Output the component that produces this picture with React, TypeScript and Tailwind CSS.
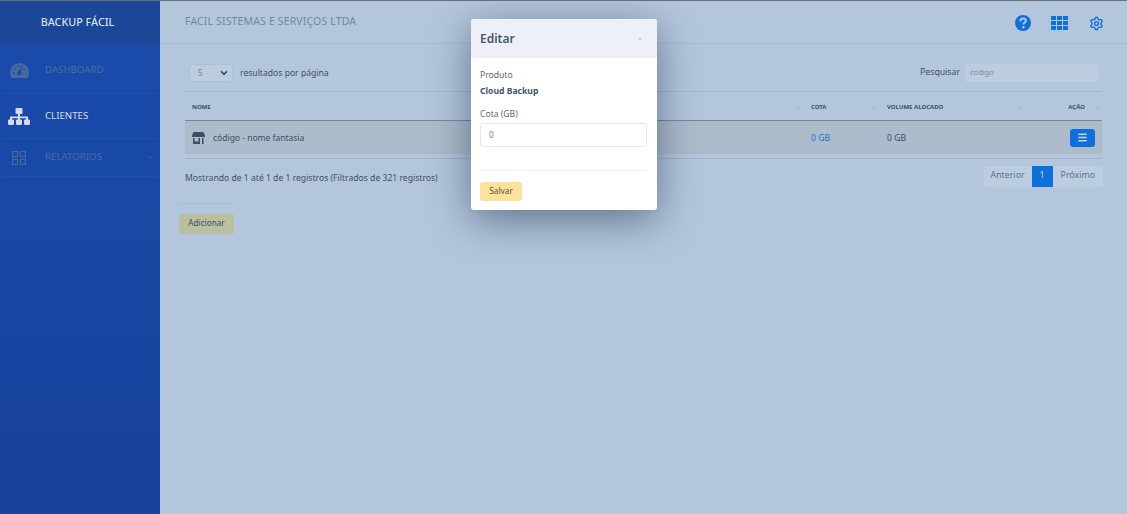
import React from 'react';
import { ChevronDown, Menu, Settings, X } from 'lucide-react';

function SortArrows() {
  return <span className="text-[6px] leading-none tracking-[-1px] font-normal text-[#8fa2ba]">↑↓</span>;
}

function Gauge() {
  return (
    <svg width="19" height="15" viewBox="0 0 19 15" fill="#47699f">
      <path d="M9.500 0A9.500 9.500 0 0 0 0 9.500c0 2 .5 3.800 1.500 5.500h16c1-1.700 1.500-3.500 1.500-5.500A9.500 9.500 0 0 0 9.500 0Z" />
      <path d="M9.800 9 12.500 2.500M4 5.500l1.500 1M8.500 2v2M15 6l-1.500 1M3 10h2" stroke="#1a4aa5" strokeWidth="1.300" fill="none" />
      <circle cx="9.500" cy="10" r="2.200" fill="#1a4aa5" />
    </svg>
  );
}

function Sitemap() {
  return (
    <svg width="22" height="17" viewBox="0 0 22 17" fill="#d3dced">
      <rect x="7.500" y="0" width="7" height="6" rx="1" />
      <path d="M10 6h2v2.500h8V12h-2V10.300h-6V12h-2v-1.700H4V12H2V8.500h8Z" />
      <rect x="0" y="11.500" width="6" height="5.500" rx="1.200" />
      <rect x="8" y="11.500" width="6" height="5.500" rx="1.200" />
      <rect x="16" y="11.500" width="6" height="5.500" rx="1.200" />
    </svg>
  );
}

function Grid2() {
  return (
    <svg width="14" height="14" viewBox="0 0 14 14" fill="none" stroke="#47699f" strokeWidth="1.200">
      <rect x="0.600" y="0.600" width="5" height="5" />
      <rect x="8.400" y="0.600" width="5" height="5" />
      <rect x="0.600" y="8.400" width="5" height="5" />
      <rect x="8.400" y="8.400" width="5" height="5" />
    </svg>
  );
}

function Store() {
  return (
    <svg width="13" height="12" viewBox="0 0 13 12" fill="#3d4f66">
      <path d="M1.500 0h10L13 3.500V5H0V3.500Z" />
      <path d="M1 6h1.500v3.500h4V6H8v6H1ZM10 6h1.500v6H10Z" />
    </svg>
  );
}

function HelpIcon() {
  return (
    <svg width="16" height="16" viewBox="0 0 16 16">
      <circle cx="8" cy="8" r="8" fill="#0f6fdc" />
      <path d="M5.300 6.200C5.400 4.500 6.600 3.600 8.100 3.600c1.600 0 2.700.9 2.700 2.200 0 1.100-.7 1.600-1.400 2.100-.6.400-.9.800-.9 1.600" stroke="#b4c6dc" strokeWidth="2" fill="none" />
      <circle cx="8.400" cy="12.300" r="1.200" fill="#b4c6dc" />
    </svg>
  );
}

function AppsIcon() {
  return (
    <div className="grid grid-cols-3 gap-px w-[17px]">
      {Array.from({ length: 9 }).map((_, i) => (
        <span key={i} className="h-[4px] bg-[#0f6fdc]" />
      ))}
    </div>
  );
}

export default function App() {
  return (
    <div className="relative flex h-[514px] w-[1127px] overflow-hidden bg-[#b4c6dc] text-[8.600px] text-[#3f4f67] font-['Noto_Sans',sans-serif]">
      <aside className="w-[160px] shrink-0 flex flex-col bg-gradient-to-b from-[#1a4cac] to-[#17429c]">
        <div className="h-[45px] shrink-0 flex items-center justify-center bg-[#1a4797] text-[10.800px] font-medium text-[#d5dfee] pr-[5px]">
          BACKUP FÁCIL
        </div>
        <nav className="px-[3px] text-[9.700px]">
          <div className="h-[49px] flex items-center border-b border-[#2450a9] text-[#4a6ca5] pl-[7px] pt-[2px]">
            <span className="w-[35px] flex"><Gauge /></span>DASHBOARD
          </div>
          <div className="h-[45px] flex items-center border-b border-[#2450a9] text-[#d3dced] pl-[5px]">
            <span className="w-[37px] flex"><Sitemap /></span>CLIENTES
          </div>
          <div className="h-[38px] flex items-center border-b border-[#2450a9] text-[#4a6ca5] pl-[9px] pr-[3px]">
            <span className="w-[33px] flex"><Grid2 /></span>RELATÓRIOS
            <ChevronDown size={7} strokeWidth={3} className="ml-auto" />
          </div>
        </nav>
      </aside>

      <main className="flex-1 min-w-0">
        <header className="h-[44px] flex items-center justify-between pl-[25px] pr-[23px] border-b border-[#a9bdd4]">
          <span className="text-[10.500px] text-[#7587a0] tracking-[0.15px]">FACIL SISTEMAS E SERVIÇOS LTDA</span>
          <div className="flex items-center gap-[20px] pt-[3px]">
            <HelpIcon />
            <AppsIcon />
            <Settings size={15} strokeWidth={2.200} className="text-[#0f6fdc] ml-[1px]" />
          </div>
        </header>

        <section className="pl-[25px] pr-[25px]">
          <div className="h-[47px] flex items-center justify-between pl-[4px] pr-[4px] pt-[11px]">
            <div className="flex items-center gap-[7px]">
              <div className="w-[44px] h-[18px] flex items-center justify-between pl-[8px] pr-[3px] rounded-[3px] bg-[#bccde1] border border-[#adc0d8] text-[8px] text-[#6d7f98]">
                5 <ChevronDown size={10} strokeWidth={4} className="text-[#2f4668]" />
              </div>
              <span>resultados por página</span>
            </div>
            <div className="flex items-center gap-[5px]">
              <span className="text-[8.700px]">Pesquisar</span>
              <div className="w-[133px] h-[18px] flex items-center px-[5px] rounded-[2px] bg-[#bccde1] text-[7.500px] text-[#7a8aa1]">código</div>
            </div>
          </div>

          <table className="w-full border-collapse border-t border-[#a3b6cd]">
            <thead>
              <tr className="h-[29px] border-b border-[#75879e] text-[6px] font-bold text-[#3d4f66]">
                <th className="pl-[7px] pt-[2px] text-left font-bold">NOME</th>
                <th className="w-[140px] pr-[11px] pt-[2px] text-right"><SortArrows /></th>
                <th className="w-[76px] pt-[2px] text-left font-bold">
                  <div className="flex items-center justify-between pr-[11px]">COTA <SortArrows /></div>
                </th>
                <th className="w-[146px] pt-[2px] text-left font-bold">
                  <div className="flex items-center justify-between pr-[11px]">VOLUME ALOCADO <SortArrows /></div>
                </th>
                <th className="w-[69px] pr-[3px] pt-[2px] font-bold">
                  <div className="flex items-center justify-end gap-[10px]">AÇÃO <SortArrows /></div>
                </th>
              </tr>
            </thead>
            <tbody>
              <tr className="h-[33px] bg-[#adbcca]">
                <td className="pl-[7px] pt-[2px]">
                  <div className="flex items-center gap-[8px] text-[8.500px]"><Store />código - nome fantasia</div>
                </td>
                <td />
                <td className="pt-[2px] text-[#1a74e0]">0 GB</td>
                <td className="pt-[2px]">0 GB</td>
                <td className="pr-[7px] pt-[1px]">
                  <div className="flex justify-end">
                    <span className="w-[25px] h-[18px] flex items-center justify-center rounded-[3px] bg-[#0f6fdc] text-[#c5d6ec]">
                      <Menu size={11} strokeWidth={3} />
                    </span>
                  </div>
                </td>
              </tr>
            </tbody>
          </table>

          <div className="flex items-start justify-between border-t border-[#a3b6cd] mt-[4px] pt-[7px]">
            <span className="pt-[6px]">Mostrando de 1 até 1 de 1 registros (Filtrados de 321 registros)</span>
            <div className="flex h-[21px] items-center rounded-[3px] bg-[#bccde1] text-[8.800px] text-[#5f7089] -mr-[1px]">
              <span className="px-[7px]">Anterior</span>
              <span className="w-[21px] h-[21px] flex items-center justify-center bg-[#0f6fdc] text-[#c5d6ec]">1</span>
              <span className="px-[8px]">Próximo</span>
            </div>
          </div>
        </section>

        <div className="ml-[19px] mt-[16px] w-[55px] border-t border-[#aabdd3] pt-[10px]">
          <span className="w-[55px] h-[20px] flex items-center justify-center rounded-[2px] bg-[#b9bf9f] text-[8.200px]">Adicionar</span>
        </div>
      </main>

      <div className="absolute left-[471px] top-[19px] w-[186px] h-[191px] rounded-[3px] bg-white shadow-[0_10px_40px_rgba(40,60,90,0.6)] flex flex-col overflow-hidden">
        <div className="h-[39px] shrink-0 flex items-center justify-between pl-[9px] pr-[14px] bg-[#edf1f7]">
          <span className="text-[12px] font-semibold text-[#46566d]">Editar</span>
          <X size={6} strokeWidth={3} className="text-[#b8bfc9]" />
        </div>
        <div className="flex-1 pl-[9px] pr-[10px] pt-[11px] text-[#5a6779]">
          <div className="leading-[12px]">Produto</div>
          <div className="mt-[4px] leading-[12px] font-bold text-[#46566d]">Cloud Backup</div>
          <div className="mt-[11px] leading-[12px]">Cota (GB)</div>
          <div className="mt-[3px] h-[24px] flex items-center px-[8px] rounded-[3px] border border-[#e3e7ef] text-[#7b8594] text-[8px]">0</div>
          <div className="mt-[23px] border-t border-[#eef0f4]" />
          <span className="mt-[11px] w-[42px] h-[19px] flex items-center justify-center rounded-[3px] bg-[#fde29b] text-[8.300px] text-[#5a5234]">Salvar</span>
        </div>
      </div>

      <div className="absolute inset-x-0 top-0 h-px bg-[#6b6f75]" />
    </div>
  );
}
